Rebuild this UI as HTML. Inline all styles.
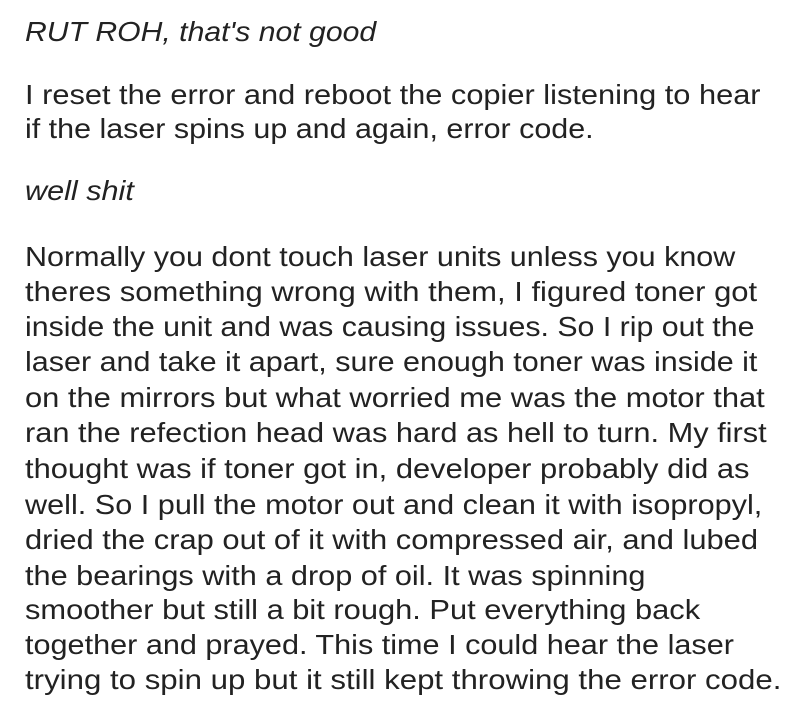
<!DOCTYPE html>
<html><head><style>
body{margin:0;width:800px;height:707px;background:#fff;overflow:hidden;position:relative}
.l{position:absolute;left:25px;font-family:"Liberation Sans",sans-serif;font-size:27.5px;color:#222;white-space:nowrap;line-height:1;transform-origin:0 0}
.i{font-style:italic}
</style></head><body>
<div class="l i" style="top:18px;transform:scaleX(1.097)">RUT ROH, that's not good</div>
<div class="l" style="top:81px;transform:scaleX(1.119)">I reset the error and reboot the copier listening to hear</div>
<div class="l" style="top:115px;transform:scaleX(1.107)">if the laser spins up and again, error code.</div>
<div class="l i" style="top:177px;transform:scaleX(1.113)">well shit</div>
<div class="l" style="top:243px;transform:scaleX(1.109)">Normally you dont touch laser units unless you know</div>
<div class="l" style="top:278px;transform:scaleX(1.127)">theres something wrong with them, I figured toner got</div>
<div class="l" style="top:313px;transform:scaleX(1.102)">inside the unit and was causing issues. So I rip out the</div>
<div class="l" style="top:348px;transform:scaleX(1.109)">laser and take it apart, sure enough toner was inside it</div>
<div class="l" style="top:384px;transform:scaleX(1.123)">on the mirrors but what worried me was the motor that</div>
<div class="l" style="top:419px;transform:scaleX(1.118)">ran the refection head was hard as hell to turn. My first</div>
<div class="l" style="top:455px;transform:scaleX(1.123)">thought was if toner got in, developer probably did as</div>
<div class="l" style="top:491px;transform:scaleX(1.114)">well. So I pull the motor out and clean it with isopropyl,</div>
<div class="l" style="top:526px;transform:scaleX(1.123)">dried the crap out of it with compressed air, and lubed</div>
<div class="l" style="top:562px;transform:scaleX(1.115)">the bearings with a drop of oil. It was spinning</div>
<div class="l" style="top:596px;transform:scaleX(1.121)">smoother but still a bit rough. Put everything back</div>
<div class="l" style="top:631px;transform:scaleX(1.113)">together and prayed. This time I could hear the laser</div>
<div class="l" style="top:666px;transform:scaleX(1.135)">trying to spin up but it still kept throwing the error code.</div>
</body></html>
